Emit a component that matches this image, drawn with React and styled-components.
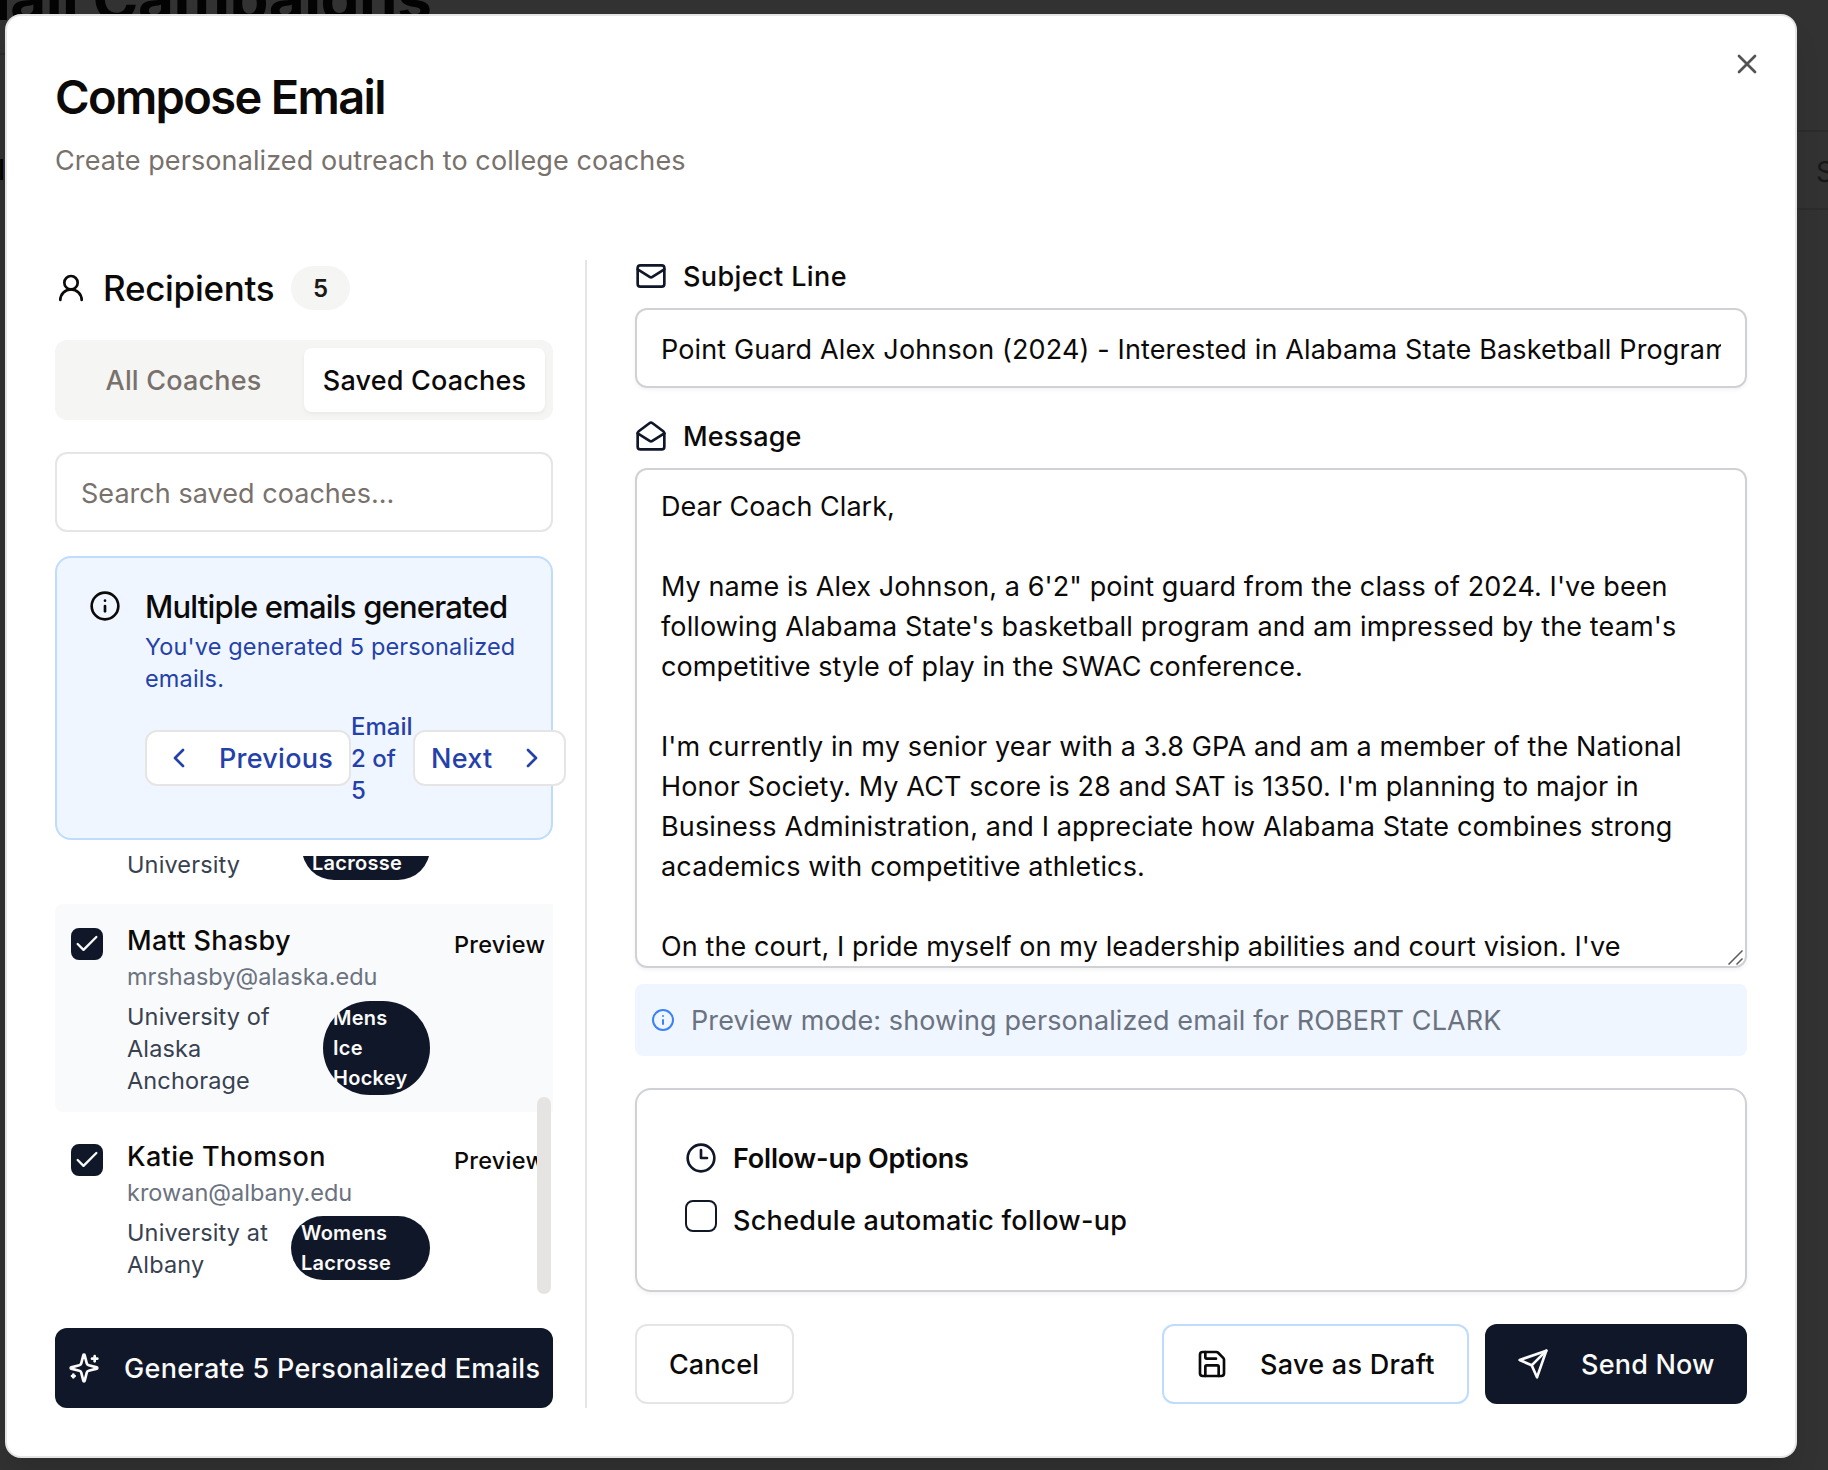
import React from 'react';
import styled, { createGlobalStyle, css } from 'styled-components';

const Global = createGlobalStyle`
  * { box-sizing: border-box; margin: 0; }
  body { margin: 0; background: #323232; font-family: Inter, "Liberation Sans", sans-serif; color: #0c0a09; }
`;

const Screen = styled.div`
  position: relative;
  width: 1828px;
  height: 1470px;
  overflow: hidden;
  padding: 14px 0 0 5px;
  background: #323232;
`;

const BackTitle = styled.div`
  position: absolute;
  left: -83px;
  top: -38px;
  font-size: 62px;
  line-height: 72px;
  font-weight: 700;
  letter-spacing: -0.5px;
  color: #030303;
  white-space: nowrap;
`;

const BackCard = styled.div`
  position: absolute;
  left: -20px;
  top: 53px;
  width: 60px;
  height: 1500px;
  border-top: 2px solid #2a2a2a;
`;

const BackLetter = styled.div`
  position: absolute;
  left: -2px;
  top: 152px;
  font-size: 28px;
  line-height: 36px;
  font-weight: 500;
  color: #030303;
`;

const BackField = styled.div`
  position: absolute;
  left: 1700px;
  top: 130px;
  width: 200px;
  height: 80px;
  padding: 20px 0 0 114px;
  border: 2px solid #2c2c2c;
  border-radius: 12px;
  font-size: 28px;
  line-height: 40px;
  color: #181716;
`;

const Dialog = styled.div`
  position: relative;
  width: 1792px;
  height: 1444px;
  padding: 48px;
  background: #fff;
  border: 2px solid #e5e5e5;
  border-radius: 16px;
  box-shadow: 0 20px 30px -6px rgba(0, 0, 0, 0.14);
`;

const Close = styled.button`
  position: absolute;
  right: 32px;
  top: 32px;
  display: flex;
  padding: 0;
  border: 0;
  background: none;
  color: #0c0a09;
  opacity: 0.7;
`;

const Header = styled.header`
  height: 196px;
  padding-top: 4px;
`;

const Title = styled.h2`
  font-size: 47px;
  line-height: 58px;
  font-weight: 600;
  letter-spacing: -1.65px;
`;

const Subtitle = styled.p`
  margin-top: 15px;
  font-size: 27px;
  line-height: 40px;
  letter-spacing: 0.1px;
  color: #78716c;
`;

const Columns = styled.div`
  display: grid;
  grid-template-columns: 532px 1112px;
  column-gap: 48px;
  height: 1148px;
`;

const Side = styled.section`
  display: flex;
  flex-direction: column;
  padding-right: 32px;
  border-right: 2px solid #e5e5e5;
`;

const SideHead = styled.div`
  display: flex;
  align-items: center;
  height: 44px;
  margin: 6px 0 30px;
`;

const SideTitle = styled.h3`
  width: 172px;
  margin: 0 16px;
  font-size: 35px;
  line-height: 44px;
  font-weight: 500;
  letter-spacing: -0.3px;
  white-space: nowrap;
`;

const Count = styled.span`
  width: 59px;
  height: 44px;
  padding-top: 1px;
  border-radius: 22px;
  background: #f5f5f4;
  color: #1c1917;
  font-size: 24px;
  line-height: 44px;
  font-weight: 600;
  text-align: center;
`;

const Tabs = styled.div`
  display: grid;
  grid-template-columns: 1fr 1fr;
  height: 80px;
  padding: 8px;
  border-radius: 12px;
  background: #f5f5f4;
`;

const Tab = styled.button`
  padding: 2px 0 0;
  border: 0;
  border-radius: 8px;
  font: 500 27px/40px Inter, sans-serif;
  letter-spacing: 0.18px;
  white-space: nowrap;
  color: #78716c;
  background: none;
  ${(p) => p.$active && css`
    color: #0c0a09;
    background: #fff;
    box-shadow: 0 2px 4px rgba(0, 0, 0, 0.05);
  `}
`;

const Field = styled.div`
  height: 80px;
  padding: 20px 24px 16px;
  border: 2px solid ${(p) => p.$border || '#e5e5e5'};
  border-radius: 12px;
  box-shadow: ${(p) => (p.$shadow ? '0 2px 4px rgba(0,0,0,0.05)' : 'none')};
  font-size: 27px;
  line-height: 40px;
  color: ${(p) => p.$color || '#0c0a09'};
  margin-top: ${(p) => p.$mt || 0}px;
`;

const Clip = styled.div`
  overflow: hidden;
  white-space: nowrap;
  letter-spacing: ${(p) => p.$ls || 0}px;
`;

const Alert = styled.div`
  display: flex;
  height: 284px;
  margin-top: 24px;
  padding: 32px;
  border: 2px solid #bfdbfe;
  border-radius: 16px;
  background: #eff6ff;
`;

const AlertBody = styled.div`
  flex: 1;
  min-width: 0;
  margin-left: 24px;
  color: #2441aa;
`;

const AlertTitle = styled.h5`
  height: 41px;
  font-size: 31px;
  line-height: 34px;
  font-weight: 500;
  letter-spacing: -0.8px;
  white-space: nowrap;
  color: #0c0a09;
`;

const AlertText = styled.p`
  width: 380px;
  font-size: 23.5px;
  line-height: 32px;
  letter-spacing: 0.15px;
`;

const Pager = styled.div`
  display: flex;
  align-items: center;
  margin-top: 16px;
`;

const PageButton = styled.button`
  display: flex;
  flex: none;
  align-items: center;
  gap: ${(p) => p.$gap}px;
  width: ${(p) => p.$w}px;
  height: 56px;
  margin-bottom: 2px;
  padding: 0 16px;
  border: 2px solid #e7e5e4;
  border-radius: 12px;
  background: #fff;
  color: #2441aa;
  font: 500 27px/40px Inter, sans-serif;
  letter-spacing: 0.25px;
`;

const ButtonText = styled.span`
  padding-top: 2px;
`;

const PageLabel = styled.span`
  flex: none;
  width: 62px;
  font-size: 24px;
  line-height: 32px;
  font-weight: 500;
`;

const ListArea = styled.div`
  position: relative;
  display: flex;
  flex-direction: column;
  justify-content: flex-end;
  gap: 8px;
  height: 440px;
  margin: 16px 0 32px;
  overflow: hidden;
`;

const Thumb = styled.div`
  position: absolute;
  right: 2px;
  bottom: 2px;
  width: 14px;
  height: 197px;
  border-radius: 7px;
  background: #e5e4e2;
`;

const Row = styled.div`
  display: flex;
  flex: none;
  width: 514px;
  height: ${(p) => p.$h}px;
  padding: 16px;
  padding-left: ${(p) => (p.$inset ? 48 : 16)}px;
  border-radius: 8px;
  background: ${(p) => (p.$tint ? '#f9fafb' : 'transparent')};
`;

const Check = styled.span`
  display: flex;
  flex: none;
  align-items: center;
  justify-content: center;
  width: 32px;
  height: 32px;
  margin-top: 8px;
  border: 2px solid #101729;
  border-radius: 8px;
  background: ${(p) => (p.$on ? '#101729' : '#fff')};
  color: #fafaf9;
`;

const Person = styled.div`
  display: flex;
  flex-direction: column;
  width: 303px;
  margin-left: 24px;
`;

const Name = styled.div`
  height: 37px;
  font-size: 27px;
  line-height: 41px;
  font-weight: 500;
  letter-spacing: 0.35px;
  white-space: nowrap;
`;

const Mail = styled.div`
  height: 39px;
  font-size: 23.5px;
  line-height: 40px;
  color: #6b7280;
`;

const Affiliation = styled.div`
  display: flex;
  align-items: ${(p) => (p.$end ? 'flex-end' : 'center')};
  justify-content: space-between;
  margin-top: ${(p) => (p.$end ? 'auto' : '4px')};
`;

const School = styled.div`
  width: 150px;
  padding-top: 1px;
  margin-bottom: -1px;
  font-size: 23.5px;
  line-height: 32px;
  letter-spacing: 0.13px;
  color: #374151;
`;

const Sport = styled.div`
  display: flex;
  flex-direction: column;
  justify-content: flex-end;
  width: ${(p) => p.$w}px;
  min-height: 64px;
  padding: 2px 9px 2px 10px;
  border-radius: 47px;
  background: #101729;
  color: #fafaf9;
  font-size: 20px;
  line-height: 30px;
  font-weight: 600;
  letter-spacing: 0.27px;
`;

const PreviewLink = styled.span`
  margin: 5px 0 0 24px;
  height: 32px;
  font-size: 23.5px;
  line-height: 40px;
  font-weight: 500;
  letter-spacing: 0.25px;
`;

const Button = styled.button`
  display: flex;
  align-items: center;
  flex: none;
  gap: ${(p) => p.$gap || 0}px;
  width: ${(p) => p.$w}px;
  height: 80px;
  padding: 0 0 0 ${(p) => p.$pl}px;
  border: 2px solid ${(p) => p.$border || '#101729'};
  border-radius: 12px;
  background: ${(p) => (p.$dark ? '#101729' : '#fff')};
  color: ${(p) => (p.$dark ? '#fafaf9' : '#0c0a09')};
  font: 500 27px/40px Inter, sans-serif;
  letter-spacing: ${(p) => p.$ls || 0}px;
  white-space: nowrap;
`;

const Main = styled.section`
  display: flex;
  flex-direction: column;
  padding-bottom: 4px;
`;

const Label = styled.div`
  display: flex;
  align-items: center;
  gap: 16px;
  height: 32px;
  margin-bottom: 16px;
  font-size: 27px;
  font-weight: 500;
  letter-spacing: ${(p) => p.$ls || 0}px;
  svg { color: #101729; }
`;

const Message = styled.div`
  position: relative;
  height: 500px;
  margin-bottom: 16px;
  padding: 17px 24px 0;
  overflow: hidden;
  border: 2px solid #d0d1d6;
  border-radius: 12px;
  box-shadow: 0 2px 4px rgba(0, 0, 0, 0.05);
  font-size: 27px;
  line-height: 40px;
`;

const Line = styled.p`
  height: 40px;
  white-space: nowrap;
  letter-spacing: ${(p) => p.$ls || 0}px;
`;

const Grip = styled.svg`
  position: absolute;
  right: 1px;
  bottom: 1px;
`;

const Notice = styled.div`
  display: flex;
  align-items: center;
  gap: 16px;
  height: 72px;
  padding: 0 16px;
  border-radius: 8px;
  background: #eff6ff;
  color: #6b7280;
  font-size: 27px;
  letter-spacing: 0.11px;
  svg { color: #3b82f6; }
`;

const Card = styled.div`
  height: 204px;
  margin: 32px 0;
  padding: 48px;
  border: 2px solid #d0d1d6;
  border-radius: 16px;
  box-shadow: 0 2px 4px rgba(0, 0, 0, 0.05);
`;

const CardRow = styled.div`
  display: flex;
  align-items: center;
  gap: 16px;
  height: 40px;
  margin-bottom: 22px;
  font-size: 27px;
  font-weight: ${(p) => p.$weight};
  letter-spacing: ${(p) => p.$ls || 0}px;
  svg { color: #101729; }
`;

const BoxSlot = styled.span`
  display: flex;
  margin-top: -16px;
`;

const Footer = styled.div`
  display: flex;
  gap: 16px;
`;

const Spacer = styled.div`
  flex: 1;
`;

const Glyph = styled.svg`
  flex: none;
`;

const Icon = ({ size = 32, children }) => (
  <Glyph width={size} height={size} viewBox="0 0 24 24" fill="none" stroke="currentColor" strokeWidth="2" strokeLinecap="round" strokeLinejoin="round">
    {children}
  </Glyph>
);

const InfoIcon = ({ size }) => (
  <Icon size={size}><circle cx="12" cy="12" r="10" /><path d="M12 16v-4" /><path d="M12 8h.01" /></Icon>
);

const CheckIcon = () => <Icon size={28}><path d="M20 6 9 17l-5-5" /></Icon>;

const lines = [
  ['Dear Coach Clark,', 0.03],
  ['', 0],
  ['My name is Alex Johnson, a 6\'2" point guard from the class of 2024. I\'ve been', 0.085],
  ["following Alabama State's basketball program and am impressed by the team's", 0.14],
  ['competitive style of play in the SWAC conference.', 0.08],
  ['', 0],
  ["I'm currently in my senior year with a 3.8 GPA and am a member of the National", 0.12],
  ["Honor Society. My ACT score is 28 and SAT is 1350. I'm planning to major in", 0.11],
  ['Business Administration, and I appreciate how Alabama State combines strong', 0.14],
  ['academics with competitive athletics.', 0.16],
  ['', 0],
  ["On the court, I pride myself on my leadership abilities and court vision. I've", 0.094],
];

const coaches = [
  { name: 'Matt Shasby', mail: 'mrshasby@alaska.edu', school: ['University of', 'Alaska', 'Anchorage'], sport: ['Mens', 'Ice', 'Hockey'], w: 107, h: 208, tint: true },
  { name: 'Katie Thomson', mail: 'krowan@albany.edu', school: ['University at', 'Albany'], sport: ['Womens', 'Lacrosse'], w: 139, h: 176 },
];

export default function App() {
  return (
    <Screen>
      <Global />
      <BackTitle>Email Campaigns</BackTitle>
      <BackCard />
      <BackLetter>l</BackLetter>
      <BackField>S</BackField>
      <Dialog>
        <Close aria-label="Close"><Icon><path d="M18 6 6 18" /><path d="m6 6 12 12" /></Icon></Close>
        <Header>
          <Title>Compose Email</Title>
          <Subtitle>Create personalized outreach to college coaches</Subtitle>
        </Header>
        <Columns>
          <Side>
            <SideHead>
              <Icon><circle cx="12" cy="8" r="5" /><path d="M20 21a8 8 0 0 0-16 0" /></Icon>
              <SideTitle>Recipients</SideTitle>
              <Count>5</Count>
            </SideHead>
            <Tabs>
              <Tab>All Coaches</Tab>
              <Tab $active>Saved Coaches</Tab>
            </Tabs>
            <Field $mt={32} $color="#78716c"><Clip $ls={0.04}>Search saved coaches...</Clip></Field>
            <Alert>
              <InfoIcon />
              <AlertBody>
                <AlertTitle>Multiple emails generated</AlertTitle>
                <AlertText>You've generated 5 personalized<br />emails.</AlertText>
                <Pager>
                  <PageButton $w={206} $gap={24}>
                    <Icon><path d="m15 18-6-6 6-6" /></Icon>
                    <ButtonText>Previous</ButtonText>
                  </PageButton>
                  <PageLabel>Email<br />2 of<br />5</PageLabel>
                  <PageButton $w={153} $gap={24}>
                    <ButtonText>Next</ButtonText>
                    <Icon><path d="m9 18 6-6-6-6" /></Icon>
                  </PageButton>
                </Pager>
              </AlertBody>
            </Alert>
            <ListArea>
              <Row $h={176} $inset>
                <Person>
                  <Affiliation $end>
                    <School>University</School>
                    <Sport $w={128}>Lacrosse</Sport>
                  </Affiliation>
                </Person>
              </Row>
              {coaches.map((c) => (
                <Row key={c.name} $h={c.h} $tint={c.tint}>
                  <Check $on><CheckIcon /></Check>
                  <Person>
                    <Name>{c.name}</Name>
                    <Mail>{c.mail}</Mail>
                    <Affiliation>
                      <School>{c.school.map((s) => <div key={s}>{s}</div>)}</School>
                      <Sport $w={c.w}>{c.sport.map((s) => <div key={s}>{s}</div>)}</Sport>
                    </Affiliation>
                  </Person>
                  <PreviewLink>Preview</PreviewLink>
                </Row>
              ))}
              <Thumb />
            </ListArea>
            <Button $dark $w={498} $pl={11} $gap={24} $ls={0.3}>
              <Icon>
                <path d="M9.937 15.5A2 2 0 0 0 8.5 14.063l-6.135-1.582a.5.5 0 0 1 0-.962L8.5 9.936A2 2 0 0 0 9.937 8.5l1.582-6.135a.5.5 0 0 1 .963 0L14.063 8.5A2 2 0 0 0 15.5 9.937l6.135 1.581a.5.5 0 0 1 0 .964L15.5 14.063a2 2 0 0 0-1.437 1.437l-1.582 6.135a.5.5 0 0 1-.963 0z" />
                <path d="M20 3v4" /><path d="M22 5h-4" /><path d="M4 17v2" /><path d="M5 18H3" />
              </Icon>
              <ButtonText>Generate 5 Personalized Emails</ButtonText>
            </Button>
          </Side>
          <Main>
            <Label $ls={0.4}>
              <Icon><rect width="20" height="16" x="2" y="4" rx="2" /><path d="m22 7-8.97 5.7a1.94 1.94 0 0 1-2.06 0L2 7" /></Icon>
              Subject Line
            </Label>
            <Field $border="#d0d1d6" $shadow>
              <Clip $ls={0.14}>Point Guard Alex Johnson (2024) - Interested in Alabama State Basketball Program</Clip>
            </Field>
            <Spacer />
            <Label $ls={0.15}>
              <Icon><path d="M21.2 8.4c.5.38.8.97.8 1.6v10a2 2 0 0 1-2 2H4a2 2 0 0 1-2-2V10a2 2 0 0 1 .8-1.6l8-6a2 2 0 0 1 2.4 0l8 6Z" /><path d="m22 10-8.97 5.7a1.94 1.94 0 0 1-2.06 0L2 10" /></Icon>
              Message
            </Label>
            <Message>
              {lines.map(([t, ls], i) => <Line key={i} $ls={ls}>{t}</Line>)}
              <Grip width="18" height="18" viewBox="0 0 18 18" fill="none" stroke="#5c5c5c" strokeWidth="1.5"><path d="M2.5 17.5l14-14M10.5 17.5l6-6" /></Grip>
            </Message>
            <Notice>
              <InfoIcon size={24} />
              Preview mode: showing personalized email for ROBERT CLARK
            </Notice>
            <Card>
              <CardRow $weight={600} $ls={-0.2}>
                <Icon><circle cx="12" cy="12" r="10" /><path d="M12 6v6h4.5" /></Icon>
                Follow-up Options
              </CardRow>
              <CardRow $weight={500} $ls={0.3}>
                <BoxSlot><Check /></BoxSlot>
                Schedule automatic follow-up
              </CardRow>
            </Card>
            <Footer>
              <Button $w={159} $pl={32} $border="#e5e5e5" $ls={0.07}><ButtonText>Cancel</ButtonText></Button>
              <Spacer />
              <Button $w={307} $pl={32} $gap={32} $border="#bfdbfe" $ls={0.28}>
                <Icon><path d="M15.2 3a2 2 0 0 1 1.4.6l3.8 3.8a2 2 0 0 1 .6 1.4V19a2 2 0 0 1-2 2H5a2 2 0 0 1-2-2V5a2 2 0 0 1 2-2z" /><path d="M17 21v-7a1 1 0 0 0-1-1H8a1 1 0 0 0-1 1v7" /><path d="M7 3v4a1 1 0 0 0 1 1h7" /></Icon>
                <ButtonText>Save as Draft</ButtonText>
              </Button>
              <Button $dark $w={262} $pl={30} $gap={32} $ls={0.2}>
                <Icon><path d="m22 2-7 20-4-9-9-4Z" /><path d="M22 2 11 13" /></Icon>
                <ButtonText>Send Now</ButtonText>
              </Button>
            </Footer>
          </Main>
        </Columns>
      </Dialog>
    </Screen>
  );
}
